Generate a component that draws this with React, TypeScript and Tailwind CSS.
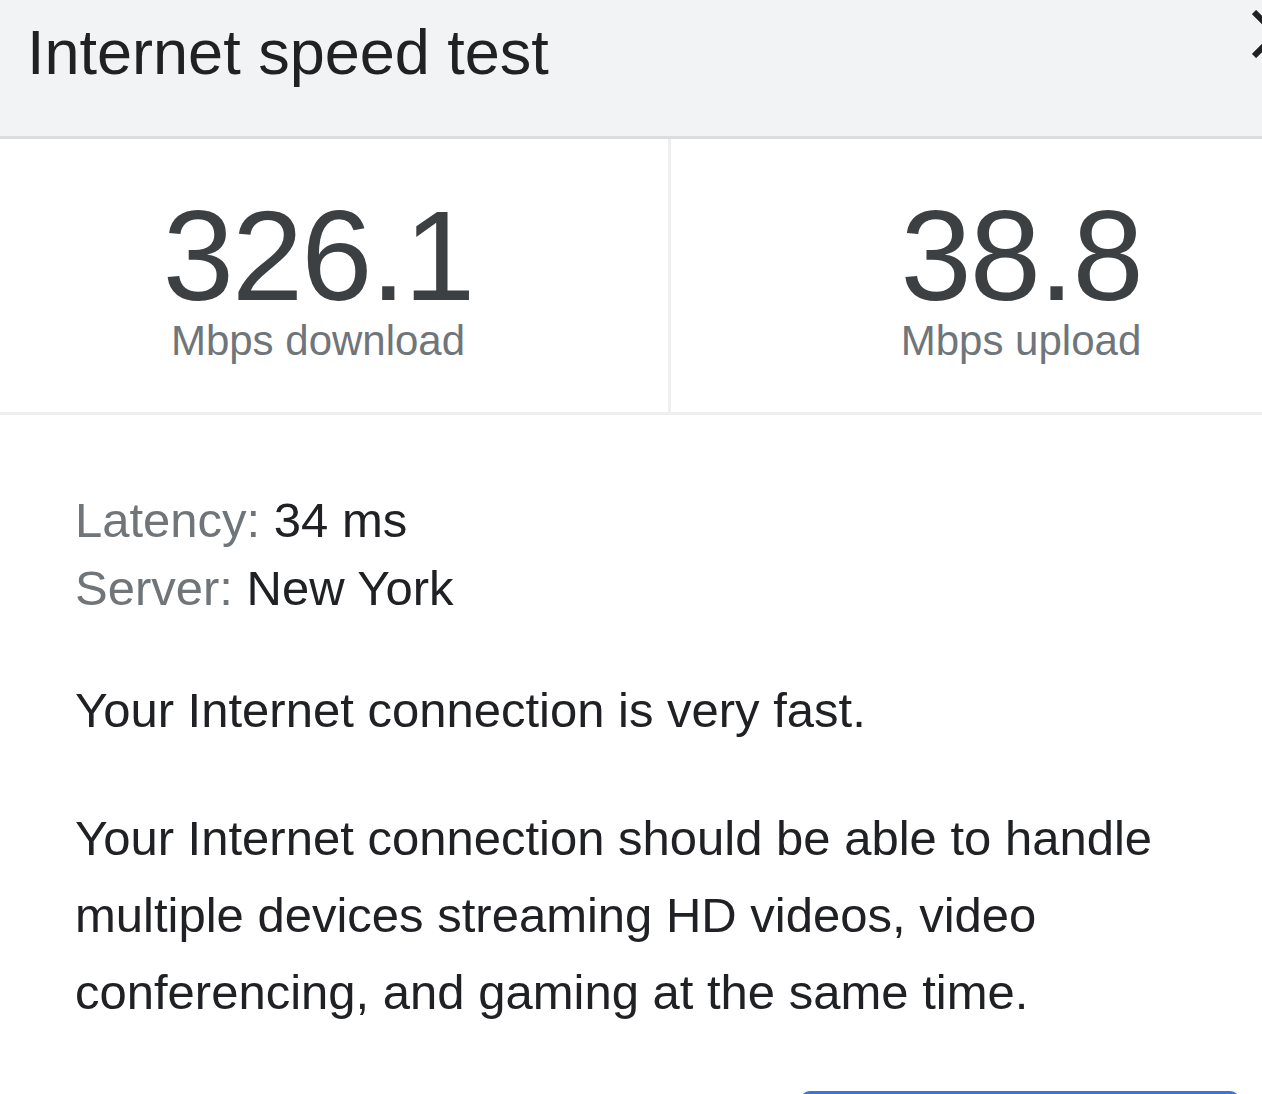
import React from 'react';

const Stat = ({ value, label, className }: { value: string; label: string; className: string }) => (
  <div className={`flex flex-col items-center pt-[53px] pb-[50px] ${className}`}>
    <div className="text-[128px] leading-none tracking-[-2px] text-[#3c4043]">{value}</div>
    <div className="text-[42px] leading-none text-[#70757a]">{label}</div>
  </div>
);

export default function App() {
  return (
    <div className="h-screen w-full overflow-hidden bg-white font-['Liberation_Sans',Arial,sans-serif] text-[#202124]">
      {/* Header */}
      <div className="flex h-[139px] items-start justify-between border-b-[3px] border-[#dadce0] bg-[#f1f3f4] pl-[27px]">
        <h1 className="pt-[21px] text-[63px] leading-none font-normal text-[#202124]">Internet speed test</h1>
        <svg width="10" height="48" viewBox="0 0 10 48" className="mt-[10px] shrink-0" aria-label="Close">
          <path d="M2 2 L46 46 M2 46 L46 2" stroke="#202124" strokeWidth="6" fill="none" />
        </svg>
      </div>

      {/* Results */}
      <div className="grid grid-cols-[671px_1fr] border-b-[3px] border-[#efefef]">
        <Stat value="326.1" label="Mbps download" className="border-r-[3px] border-[#efefef] pr-[32px]" />
        <Stat value="38.8" label="Mbps upload" className="pl-[109px]" />
      </div>

      {/* Details */}
      <div className="pl-[75px] pr-[22px] pt-[71px]">
        <div className="text-[49px] leading-[68px]">
          <div>
            <span className="text-[#70757a]">Latency:</span> 34 ms
          </div>
          <div>
            <span className="text-[#70757a]">Server:</span> New York
          </div>
        </div>
        <p className="mt-[50px] text-[49px] leading-[77px]">Your Internet connection is very fast.</p>
        <p className="mt-[51px] max-w-[1110px] text-[49px] leading-[77px]">
          Your Internet connection should be able to handle multiple devices streaming HD videos, video conferencing, and gaming at the same time.
        </p>
        <div className="mt-[60px] flex justify-end">
          <button className="h-[64px] w-[440px] rounded-[10px] bg-[#3a76d8] text-[36px] text-white">Test again</button>
        </div>
      </div>
    </div>
  );
}
